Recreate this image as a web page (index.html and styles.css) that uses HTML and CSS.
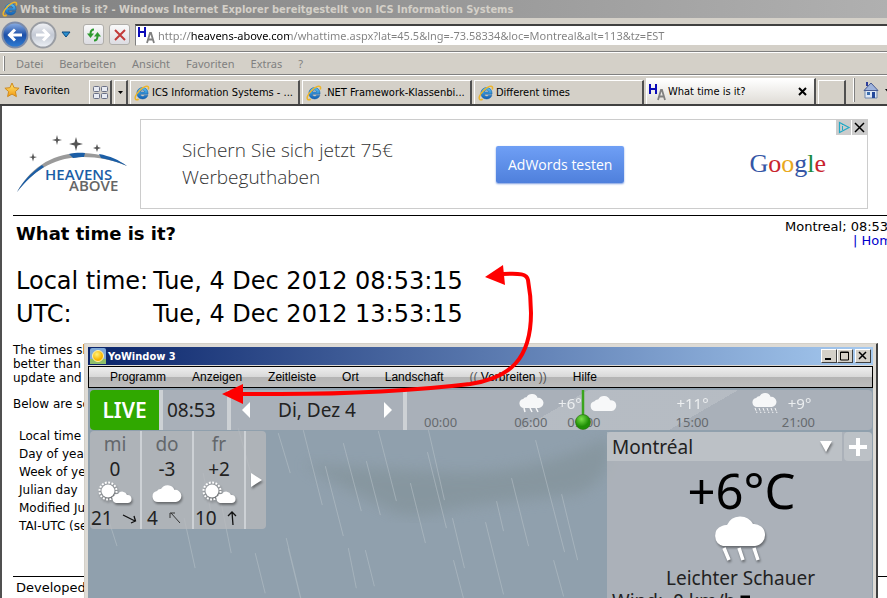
FILE: index.html
```html
<!DOCTYPE html>
<html lang="de">
<head>
    <meta charset="UTF-8">
    <meta name="viewport" content="width=device-width, initial-scale=1.0">
    <title>What time is it?</title>
    <link rel="stylesheet" href="styles.css">
</head>
<body>
    <!-- Shared icons -->
    <svg class="sprite" aria-hidden="true">
        <defs>
            <linearGradient id="ieBlue" x1="0" y1="0" x2="0" y2="1">
                <stop offset="0" stop-color="#5cc3f5"/>
                <stop offset="1" stop-color="#0f5fb5"/>
            </linearGradient>
            <linearGradient id="backBlue" x1="0" y1="0" x2="0" y2="1">
                <stop offset="0" stop-color="#8fb2e6"/>
                <stop offset="0.5" stop-color="#1c4fa8"/>
                <stop offset="1" stop-color="#2f7fd6"/>
            </linearGradient>
            <linearGradient id="fwdGrey" x1="0" y1="0" x2="0" y2="1">
                <stop offset="0" stop-color="#f4f5f8"/>
                <stop offset="0.5" stop-color="#c3c9d4"/>
                <stop offset="1" stop-color="#eef1f6"/>
            </linearGradient>
            <linearGradient id="starGold" x1="0" y1="0" x2="0" y2="1">
                <stop offset="0" stop-color="#ffe873"/>
                <stop offset="1" stop-color="#f39a12"/>
            </linearGradient>
            <radialGradient id="sunGold" cx="0.4" cy="0.35">
                <stop offset="0" stop-color="#fff27a"/>
                <stop offset="1" stop-color="#f7b500"/>
            </radialGradient>
            <radialGradient id="knobGreen" cx="0.4" cy="0.3">
                <stop offset="0" stop-color="#7ae04a"/>
                <stop offset="1" stop-color="#1f8f05"/>
            </radialGradient>
            <filter id="soft"><feGaussianBlur stdDeviation="7"/></filter>
        </defs>
        <symbol id="ie" viewBox="0 0 16 16">
            <path d="M12.6 9.2H6.2c.1 1.300 1 2.200 2.400 2.200.9 0 1.600-.4 2-1h3.200c-.8 2.200-2.700 3.500-5.200 3.500-3.400 0-5.700-2.300-5.700-5.600S5.300 2.600 8.600 2.600s5.400 2.300 5.400 5.700v.9zM6.300 7h4.400c-.2-1.200-1-1.900-2.200-1.900S6.500 5.800 6.300 7z" fill="url(#ieBlue)" stroke="#1460a8" stroke-width="0.600"/>
            <path d="M14.200 4.500C15.200 2 14 .6 11.600 1.400 7.800 2.600 2.800 7.600 1.500 11.300c-1 3 .4 4.200 3.200 2.900" fill="none" stroke="#edb52a" stroke-width="1.500"/>
        </symbol>
        <symbol id="ha" viewBox="0 0 18 18">
            <path d="M2 1v10M8 1v10M2 6h6" fill="none" stroke="#0b0bb8" stroke-width="2"/>
            <path d="M10 17l3-10h1l3 10M11 13.500h5" fill="none" stroke="#808080" stroke-width="1.800"/>
        </symbol>
        <symbol id="cloud" viewBox="0 0 30 18">
            <path d="M6 18a5.500 5.500 0 0 1-1-10.900 4 4 0 0 1 4-2 7.500 7.500 0 0 1 13.500.8A6 6 0 0 1 24 18z" fill="#fff"/>
        </symbol>
        <symbol id="suncloud" viewBox="0 0 34 24">
            <circle cx="10" cy="10" r="8.500" fill="none" stroke="#fff" stroke-width="2" stroke-dasharray="1.800 1.536"/>
            <circle cx="10" cy="10" r="6.500" fill="#fff"/>
            <path d="M18 22a4 4 0 0 1-1-7.600 3 3 0 0 1 3-1.400 5 5 0 0 1 9 1 4 4 0 0 1 1 8z" fill="#fff"/>
        </symbol>
    </svg>

    <!-- Browser -->
    <div class="browser">
        <div class="titlebar">
            <svg class="icon16"><use href="#ie"/></svg>
            <span>What time is it? - Windows Internet Explorer bereitgestellt von ICS Information Systems</span>
        </div>

        <div class="navbar">
            <button class="plain" aria-label="Zurück">
                <svg width="28" height="28" viewBox="0 0 28 28">
                    <circle cx="14" cy="14" r="12.500" fill="url(#backBlue)" stroke="#7c8ba8" stroke-width="2"/>
                    <path d="M21 14H9M14 8.500L8.500 14l5.500 5.500" fill="none" stroke="#fff" stroke-width="3"/>
                </svg>
            </button>
            <button class="plain" aria-label="Vorwärts">
                <svg width="28" height="28" viewBox="0 0 28 28">
                    <circle cx="14" cy="14" r="12.500" fill="url(#fwdGrey)" stroke="#9a9da3" stroke-width="2"/>
                    <path d="M7 14h12M14 8.500l5.500 5.500-5.500 5.500" fill="none" stroke="#fff" stroke-width="3"/>
                </svg>
            </button>
            <button class="plain history" aria-label="Verlauf">
                <svg width="10" height="7" viewBox="0 0 10 7"><path d="M1 1h8L5 6z" fill="#2a8fd0" stroke="#0c4a80"/></svg>
            </button>
            <button class="tool" aria-label="Aktualisieren">
                <svg width="16" height="16" viewBox="0 0 16 16">
                    <path d="M8 2.500C5.500 2.500 4.500 4 4.500 7" fill="none" stroke="#2e9a2e" stroke-width="2"/>
                    <path d="M1 6.500h7L4.500 11z" fill="#2e9a2e"/>
                    <path d="M8 13.500c2.500 0 3.500-1.500 3.500-4.500" fill="none" stroke="#2e9a2e" stroke-width="2"/>
                    <path d="M8 9.500h7L11.500 5z" fill="#2e9a2e"/>
                </svg>
            </button>
            <button class="tool" aria-label="Abbrechen">
                <svg width="16" height="16" viewBox="0 0 16 16"><path d="M3 3l10 10M13 3L3 13" stroke="#c23a3a" stroke-width="2"/></svg>
            </button>
            <div class="address">
                <svg class="icon18"><use href="#ha"/></svg>
                <input type="text" aria-label="Adresse" value="http://heavens-above.com/whattime.aspx?lat=45.5&amp;lng=-73.58334&amp;loc=Montreal&amp;alt=113&amp;tz=EST">
            </div>
        </div>

        <div class="menubar">
            <span class="grip"></span>
            <button>Datei</button>
            <button>Bearbeiten</button>
            <button>Ansicht</button>
            <button>Favoriten</button>
            <button>Extras</button>
            <button>?</button>
        </div>

        <div class="tabbar">
            <button class="favorites">
                <svg width="16" height="16" viewBox="0 0 16 16"><path d="M8 1l2.100 4.700 5 .5-3.700 3.400 1 5L8 12.100l-4.400 2.500 1-5L.9 6.200l5-.5z" fill="url(#starGold)" stroke="#d08a1c"/></svg>
                Favoriten
            </button>
            <button class="tab quick" aria-label="Schnellregisterkarten">
                <svg width="16" height="14" viewBox="0 0 16 14"><g fill="#e8ebf3" stroke="#6a7086"><rect x="0.500" y="0.500" width="6" height="5" rx="1"/><rect x="8.500" y="0.500" width="6" height="5" rx="1"/><rect x="0.500" y="7.500" width="6" height="5" rx="1"/><rect x="8.500" y="7.500" width="6" height="5" rx="1"/></g></svg>
            </button>
            <button class="tab arrow" aria-label="Registerkartenliste">
                <svg width="5" height="3" viewBox="0 0 5 3"><path d="M0 0h5L2.500 3z"/></svg>
            </button>
            <button class="tab page"><svg class="icon16"><use href="#ie"/></svg><span>ICS Information Systems - ...</span></button>
            <button class="tab page"><svg class="icon16"><use href="#ie"/></svg><span>.NET Framework-Klassenbi...</span></button>
            <button class="tab page"><svg class="icon16"><use href="#ie"/></svg><span>Different times</span></button>
            <button class="tab page active">
                <svg class="icon18"><use href="#ha"/></svg><span>What time is it?</span>
                <svg class="close" width="9" height="9" viewBox="0 0 9 9"><path d="M1 1l7 7M8 1L1 8" stroke="#000" stroke-width="2"/></svg>
            </button>
            <button class="tab new" aria-label="Neue Registerkarte"></button>
            <span class="grip tall"></span>
            <button class="home" aria-label="Startseite">
                <svg width="16" height="18" viewBox="0 0 16 18">
                    <path d="M3 1h2v4H3z" fill="#2f3f9a"/>
                    <path d="M2 9h12v8H2z" fill="#dfe8f5" stroke="#7187ad"/>
                    <path d="M8 2L1 9.500h14z" fill="#9fb3dc" stroke="#4a5c92"/>
                    <path d="M9 11h3v6H9z" fill="#24489a"/>
                    <path d="M4 11h3v3H4z" fill="#3c6dad"/>
                </svg>
            </button>
            <svg width="5" height="3" viewBox="0 0 5 3"><path d="M0 0h5L2.500 3z"/></svg>
        </div>
    </div>

    <!-- Page -->
    <main class="content">
        <div class="banner">
            <svg class="logo" width="112" height="64" viewBox="0 0 112 64" role="img" aria-label="Heavens Above">
                <path d="M1 60C17 31 43 20 68 21c17 1 31 5 43 13C97 28 82 25 67 25 42 25 19 36 1 60z" fill="#9a9a9a"/>
                <path d="M1 60c6-11 15-20 25-27l2 2C18 41 9 50 1 60zM53 22c5-1 10-1.500 16-1l-1 4c-4 0-7 .500-11 1zM83 22c11 2 20 6 28 12-9-4-17-6-26-8z" fill="#1b5ea6"/>
                <g fill="#555">
                    <path d="M41 3l1 4 4 1-4 1-1 4-1-4-4-1 4-1z"/>
                    <path d="M60 5l1.500 5.500L67 12l-5.500 1.500L60 19l-1.500-5.500L53 12l5.500-1.500z"/>
                    <path d="M81 12l1 3 3 1-3 1-1 3-1-3-3-1 3-1z"/>
                    <path d="M17 21l1 3.500 3 .500-3 1-1 3.500-1-3.500-3-1 3-.500z"/>
                </g>
                <text class="logo-top" x="29" y="48">HEAVENS</text>
                <text class="logo-bottom" x="53" y="59">ABOVE</text>
            </svg>
            <div class="ad">
                <p>Sichern Sie sich jetzt 75€<br>Werbeguthaben</p>
                <button class="adwords">AdWords testen</button>
                <div class="google"><span class="b">G</span><span class="r">o</span><span class="y">o</span><span class="b">g</span><span class="g">l</span><span class="r">e</span></div>
                <div class="ad-corner">
                    <svg width="15" height="15" viewBox="0 0 15 15"><path fill="#ccc" d="M0 0h15v15H0z"/><path d="M3.500 2.500v10L13 7.500z" fill="none" stroke="#22a9c6" stroke-width="1.200"/><path d="M6.500 6v4M6.500 4v1" stroke="#22a9c6"/></svg>
                    <svg width="15" height="15" viewBox="0 0 15 15"><path fill="#ccc" d="M0 0h15v15H0z"/><path d="M3 3l9 9M12 3l-9 9" stroke="#000" stroke-width="1.500"/></svg>
                </div>
            </div>
        </div>

        <div class="heading">
            <h1>What time is it?</h1>
            <div class="place">
                Montreal; 08:53<br>
                <span class="place-links">| <a href="#">Home</a></span>
            </div>
        </div>

        <table class="clock">
            <tr><td>Local time:</td><td>Tue, 4 Dec 2012 08:53:15</td></tr>
            <tr><td>UTC:</td><td>Tue, 4 Dec 2012 13:53:15</td></tr>
        </table>

        <p class="note">The times shown<br>better than<br>update and</p>
        <p class="note">Below are some</p>

        <table class="dates">
            <tr><td>Local time</td></tr>
            <tr><td>Day of year</td></tr>
            <tr><td>Week of year</td></tr>
            <tr><td>Julian day</td></tr>
            <tr><td>Modified Julian</td></tr>
            <tr><td>TAI-UTC (sec)</td></tr>
        </table>

        <footer>Developed</footer>
    </main>

    <!-- Weather window -->
    <section class="yowindow">
        <div class="yo-title">
            <svg width="16" height="16" viewBox="0 0 16 16"><rect width="16" height="16" rx="2" fill="#7fa9d8"/><path d="M0 11h16v5H0z" fill="#8fbf6a"/><circle cx="8" cy="8" r="5.500" fill="url(#sunGold)" stroke="#fff3b0"/></svg>
            <span>YoWindow 3</span>
            <button aria-label="Minimieren"><svg width="12" height="10" viewBox="0 0 12 10"><path d="M2 7h6v2H2z"/></svg></button>
            <button aria-label="Maximieren"><svg width="12" height="10" viewBox="0 0 12 10"><path d="M1.500 1h8v8h-8zM1 1.500h9" fill="none" stroke="#000"/></svg></button>
            <button class="yo-close" aria-label="Schließen"><svg width="12" height="10" viewBox="0 0 12 10"><path d="M2 1l7 7M9 1L2 8" stroke="#000" stroke-width="1.500"/></svg></button>
        </div>
        <div class="yo-menu">
            <button>Programm</button>
            <button>Anzeigen</button>
            <button>Zeitleiste</button>
            <button>Ort</button>
            <button>Landschaft</button>
            <button><i>((</i> Verbreiten <i>))</i></button>
            <button>Hilfe</button>
        </div>

        <div class="scene">
            <svg class="rain" viewBox="0 0 784 210" preserveAspectRatio="xMidYMin slice">
                <path d="M215 76q60 4 145 8t158-34q10 40-30 56-84 8-120 14-50 14-70 0-50-24-83-44z" fill="#83939a" opacity="0.700" filter="url(#soft)"/>
                <path d="M215 42l19 75M237 78l18 70M255 55l18 68M290 43l18 70M278 73l14 54M322 95l15 60M340 42l16 70M339 64l19 76M364 130l12 50M397 134l18 72M408 113l7 30M423 90l17 68M447 52l29 112M473 106l16 66M96 130l11 50M133 115l10 50M198 150l17 70M200 160l16 65M260 160l8 40M277 162l9 36M167 165l10 40M115 85l10 50M150 40l14 50M190 45l12 40M365 172l10 38M20 130l9 28M465 172l10 36" fill="none" stroke="#bcc6cc" stroke-width="1" opacity="0.500"/>
            </svg>

            <div class="bar">
                <button class="live">LIVE</button>
                <div class="time">08:53</div>
                <div class="date">
                    <button class="plain" aria-label="Voriger Tag"><svg width="8" height="16" viewBox="0 0 8 16"><path d="M8 0v16L0 8z" fill="#fff"/></svg></button>
                    <span>Di, Dez 4</span>
                    <button class="plain" aria-label="Nächster Tag"><svg width="8" height="16" viewBox="0 0 8 16"><path d="M0 0v16l8-8z" fill="#fff"/></svg></button>
                </div>
                <div class="timeline">
                    <div class="forecast">
                        <svg width="26" height="20" viewBox="0 0 26 20"><use href="#cloud" width="25" height="15"/><path d="M5 15l1 4M11 15l2 4M17 15l2 4" stroke="#fff" stroke-width="1.500"/></svg>
                        <span>+6°</span>
                        <svg width="27" height="16" viewBox="0 0 27 16"><use href="#cloud" width="27" height="16"/></svg>
                        <span>+11°</span>
                        <svg width="26" height="22" viewBox="0 0 26 22"><use href="#cloud" width="25" height="15"/><path d="M3 16l2 5M7 16l2 5M11 16l2 5M15 16l2 5M19 16l2 5M23 16l2 5" stroke="#fff" stroke-dasharray="3 1"/></svg>
                        <span>+9°</span>
                    </div>
                    <div class="hours">
                        <span>00:00</span><span>06:00</span><span>09:00</span><span>15:00</span><span>21:00</span>
                    </div>
                    <svg class="marker" width="18" height="40" viewBox="0 0 18 40"><path d="M9 0v26" stroke="#3aa51c" stroke-width="2.500"/><circle cx="9" cy="32" r="7.500" fill="url(#knobGreen)" stroke="#2b6d14" stroke-width="0.600"/></svg>
                </div>
            </div>

            <div class="lower">
                <div class="days">
                    <div class="day">
                        <span class="name">mi</span><span>0</span>
                        <svg width="34" height="24"><use href="#suncloud"/></svg>
                        <div class="low">21<svg width="15" height="12" viewBox="0 0 15 12"><path d="M1 3l12 6M9 11l4.500-2L12 4" fill="none" stroke="#111" stroke-width="1.300"/></svg></div>
                    </div>
                    <div class="day">
                        <span class="name">do</span><span>-3</span>
                        <svg width="30" height="24" viewBox="0 0 30 24"><use href="#cloud" y="3" width="30" height="18"/></svg>
                        <div class="low short">4<svg width="15" height="12" viewBox="0 0 15 12"><path d="M13 11L4 1M3 6V1h5" fill="none" stroke="#333"/></svg></div>
                    </div>
                    <div class="day">
                        <span class="name">fr</span><span>+2</span>
                        <svg width="34" height="24"><use href="#suncloud"/></svg>
                        <div class="low">10<svg width="15" height="14" viewBox="0 0 15 14"><path d="M7 14L6 1M2 5l4-4 4 4" fill="none" stroke="#111" stroke-width="1.300"/></svg></div>
                    </div>
                    <button class="more" aria-label="Weitere Tage"><svg width="11" height="14" viewBox="0 0 11 14"><path d="M0 0v14l11-7z" fill="#fff"/></svg></button>
                </div>

                <div class="current">
                    <div class="place-row">
                        <div class="picker">
                            <select aria-label="Ort"><option>Montréal</option></select>
                            <svg width="12" height="11" viewBox="0 0 12 11"><path d="M0 0h12L6 11z" fill="#fff"/></svg>
                        </div>
                        <button class="add" aria-label="Ort hinzufügen"><svg width="18" height="18" viewBox="0 0 18 18"><path d="M9 0v18M0 9h18" stroke="#fff" stroke-width="4"/></svg></button>
                    </div>
                    <div class="temp">+6°C</div>
                    <svg class="big-cloud" width="60" height="50" viewBox="0 0 60 50">
                        <path d="M12 31a10.500 10.500 0 0 1-1-20 10 10 0 0 1 5-1 14.500 14.500 0 0 1 26-1A11 11 0 0 1 44 31z" fill="#fff"/>
                        <path d="M13 33l5 12M28 33l4 12M43 33l4 12" stroke="#fff" stroke-width="3.500"/>
                    </svg>
                    <div class="state">Leichter Schauer</div>
                    <div class="wind">Wind:&nbsp; 0 km/h <svg width="12" height="12" viewBox="0 0 12 12"><path d="M10 11L3 4M2 9V2h8" fill="none" stroke="#000" stroke-width="3"/></svg></div>
                </div>
            </div>
        </div>
    </section>

    <!-- Arrow joining the two clocks -->
    <svg class="pointer" width="320" height="150" viewBox="220 260 320 150" aria-hidden="true">
        <path d="M240 394h40c70 0 140-4 190-10 40-6 61-25 61-71q0-17-3-33c-1-6-8-7-25-6" fill="none" stroke="#f00" stroke-width="4"/>
        <path d="M222 394l21-10v20zM485 277l18-12 2 20z" fill="#f00"/>
    </svg>
</body>
</html>
```

FILE: styles.css
```css
* {
    box-sizing: border-box;
}
html {
    height: 100%;
}
body {
    margin: 0;
    height: 100%;
    overflow: hidden;
    position: relative;
    background-color: #fff;
    color: #000;
    font-family: "DejaVu Sans", Verdana, sans-serif;
    font-size: 12px;
}
button, input, select {
    font: inherit;
    color: inherit;
    margin: 0;
    padding: 0;
    border: 0;
    background: none;
}
svg {
    display: block;
    flex: none;
}
.sprite {
    position: absolute;
    width: 0;
    height: 0;
}
.icon16 {
    width: 16px;
    height: 16px;
}
.icon18 {
    width: 18px;
    height: 18px;
}

/* Browser */
.browser {
    background-color: #d4d0c8;
    font-family: "DejaVu Sans Condensed", "DejaVu Sans", Tahoma, sans-serif;
    font-size: 11px;
    white-space: nowrap;
}
.titlebar {
    display: flex;
    align-items: center;
    gap: 2px;
    height: 18px;
    padding-left: 2px;
    background: linear-gradient(to right, #808080, #b0b0b0);
    color: #d4d0c8;
    font-weight: bold;
}
.navbar {
    display: flex;
    align-items: center;
    height: 34px;
    padding-left: 1px;
    border-bottom: 1px solid #808080;
}
.history {
    margin: 0 12px 0 4px;
}
.tool {
    display: flex;
    align-items: center;
    justify-content: center;
    width: 21px;
    height: 21px;
    margin-right: 5px;
    border: 1px solid #b0aeaa;
    border-radius: 3px;
    background: linear-gradient(#fafafa, #dcdce2);
}
.address {
    display: flex;
    align-items: center;
    flex: 1;
    gap: 3px;
    height: 22px;
    padding-left: 1px;
    border: 1px solid #808080;
    border-top: 2px solid #404040;
    border-right: 0;
    border-bottom-color: #d4d0c8;
    background-color: #fff;
}
.address input {
    flex: 1;
    height: 18px;
    color: transparent;
    font-family: "Noto Sans", Tahoma, sans-serif;
    background: linear-gradient(to right, #808080 32px, #000 32px, #000 131px, #808080 131px);
    -webkit-background-clip: text;
    background-clip: text;
}
.menubar {
    display: flex;
    align-items: center;
    gap: 16px;
    height: 23px;
    padding-left: 3px;
    border-top: 1px solid #fff;
    border-bottom: 1px solid #808080;
    color: #808080;
    font-family: "Noto Sans", Tahoma, sans-serif;
}
.grip {
    width: 2px;
    height: 15px;
    margin-right: -5px;
    border-right: 1px solid #808080;
    background-color: #fff;
}
.tabbar {
    display: flex;
    align-items: flex-end;
    height: 31px;
    border-top: 1px solid #fff;
    border-bottom: 2px solid #404040;
}
.favorites {
    display: flex;
    align-items: center;
    align-self: center;
    gap: 4px;
    width: 85px;
    padding-left: 4px;
}
.tab {
    display: flex;
    align-items: center;
    height: 24px;
    margin-left: 4px;
    border-top: 1px solid #fff;
    border-left: 1px solid #fff;
    border-right: 2px solid #505050;
}
.quick {
    width: 23px;
    padding-left: 3px;
}
.arrow {
    width: 14px;
    margin-left: 2px;
    padding-left: 3px;
}
.page {
    flex: 1;
    max-width: 170px;
    gap: 2px;
    padding-left: 3px;
    margin-left: 2px;
    overflow: hidden;
}
.active {
    height: 26px;
    padding-left: 1px;
    background: linear-gradient(#fff, #dfdcd6);
}
.close {
    margin: 0 7px 0 auto;
}
.new {
    width: 28px;
    margin-left: 2px;
}
.tall {
    height: 24px;
    margin: 0 8px 2px 7px;
}
.home {
    margin: 0 6px 5px 0;
}
.tabbar > svg {
    align-self: center;
    margin-right: -3px;
}

/* Page */
.content {
    padding: 13px 0 0 11px;
    border-left: 2px solid #505050;
}
.banner {
    display: flex;
    align-items: center;
    gap: 12px;
    padding: 0 19px 6px 3px;
}
.logo text {
    font-family: "Open Sans", sans-serif;
    font-size: 15px;
    font-weight: 600;
}
.logo .logo-top {
    fill: #1b5ea6;
}
.logo .logo-bottom {
    fill: #666;
}
.ad {
    display: flex;
    align-items: center;
    justify-content: space-between;
    position: relative;
    flex: 1;
    height: 90px;
    padding: 0 41px;
    border: 1px solid #ccc;
    font-family: "Open Sans", sans-serif;
}
.ad p {
    margin: 0;
    font-size: 19px;
    font-weight: 300;
    line-height: 27px;
    color: #333;
}
.adwords {
    height: 37px;
    margin-right: 22px;
    padding: 0 12px;
    border-radius: 2px;
    background: linear-gradient(#6f9ff5, #4f80dc);
    box-shadow: 0 1px 2px #7a9be0;
    color: #fff;
    font-size: 14px;
}
.google {
    font-family: "Liberation Serif", serif;
    font-size: 26px;
}
.google .b { color: #3556a6; }
.google .r { color: #c9252d; }
.google .y { color: #e9a820; }
.google .g { color: #1a8a3c; }
.ad-corner {
    display: flex;
    gap: 1px;
    position: absolute;
    top: 0;
    right: 0;
}
.heading {
    display: flex;
    justify-content: space-between;
    height: 50px;
    border-top: 1px solid #000;
}
h1 {
    margin: 7px 0 0 3px;
    font-size: 18px;
    line-height: 22px;
}
.place {
    width: 102px;
    padding-top: 4px;
    font-size: 13px;
    line-height: 14px;
    white-space: nowrap;
}
.place-links {
    padding-left: 68px;
    color: #00c;
}
.place a {
    color: #00c;
    text-decoration: none;
}
.clock {
    border-spacing: 0;
    font-size: 24px;
    line-height: 33px;
}
.clock td {
    padding: 0 2px 0 3px;
}
.note {
    margin: 12px 0 12px;
    line-height: 14px;
}
.note + .note {
    margin-bottom: 16px;
}
.dates {
    border-spacing: 0;
    line-height: 18px;
}
.dates td {
    padding: 0 6px;
}
footer {
    margin-top: 41px;
    padding: 3px;
    border-top: 1px solid #000;
    font-size: 13px;
}

/* Weather window */
.yowindow {
    display: flex;
    flex-direction: column;
    position: absolute;
    top: 343px;
    left: 84px;
    right: 9px;
    bottom: 0;
    padding: 3px 3px 0;
    border: 1px solid #d4d0c8;
    border-right: 2px solid #404040;
    border-bottom: 0;
    background-color: #dedbd5;
    white-space: nowrap;
}
.yo-title {
    display: flex;
    align-items: center;
    height: 18px;
    padding: 0 2px;
    background: linear-gradient(to right, #0a246a, #a6caf0);
    color: #fff;
    font-family: "DejaVu Sans Condensed", "DejaVu Sans", Tahoma, sans-serif;
    font-size: 11px;
    font-weight: bold;
}
.yo-title span {
    flex: 1;
    padding-left: 2px;
}
.yo-title button {
    width: 16px;
    height: 14px;
    padding: 1px;
    border: 1px solid #404040;
    border-top-color: #fff;
    border-left-color: #fff;
    background-color: #d4d0c8;
}
.yo-title .yo-close {
    margin-left: 2px;
}
.yo-menu {
    display: flex;
    align-items: center;
    gap: 26px;
    height: 22px;
    margin-top: 1px;
    padding-left: 21px;
    border: 1px solid #000;
    background: linear-gradient(#eee, #d8d8d8 50%, #b4b4b4 50%, #bdbdbd);
    font-family: "Liberation Sans", Arial, sans-serif;
    font-size: 12px;
}
.yo-menu i {
    color: #555;
    font-style: normal;
}
.scene {
    flex: 1;
    position: relative;
    padding: 2px 1px 0 2px;
    overflow: hidden;
    background-color: #90a0ad;
    color: #222;
    font-family: "Noto Sans", Tahoma, sans-serif;
    font-size: 19px;
}
.rain {
    position: absolute;
    top: 0;
    left: 0;
    width: 100%;
    height: 100%;
}
.bar, .lower {
    display: flex;
    position: relative;
}
.bar {
    height: 40px;
}
.live {
    width: 69px;
    border-radius: 4px 0 0 4px;
    background-color: #30a800;
    color: #fff;
    font-size: 21px;
    font-weight: 600;
}
.time, .date, .timeline {
    border-left: 4px solid #cdd1d5;
    background-color: rgba(178, 182, 190, 0.75);
}
.time {
    width: 68px;
    padding-left: 4px;
    line-height: 40px;
}
.date {
    display: flex;
    align-items: center;
    justify-content: space-between;
    width: 176px;
    padding: 0 11px;
}
.timeline {
    flex: 1;
    position: relative;
    border-radius: 0 4px 4px 0;
    background-image: linear-gradient(150deg, rgba(255,255,255,0) 34%, rgba(255,255,255,0.15) 34%, rgba(255,255,255,0.15) 62%, rgba(255,255,255,0) 62%);
}
.forecast, .hours {
    display: grid;
}
.forecast {
    grid-template-columns: 39fr 32fr 86fr 75fr 36fr 84fr;
    align-items: center;
    height: 25px;
    padding-left: 112px;
    color: #f2f4f5;
    font-size: 15px;
    opacity: 0.9;
}
.hours {
    grid-template-columns: 90fr 53fr 108fr 106fr 90fr;
    padding-left: 17px;
    color: #666a6e;
    font-size: 13px;
    line-height: 14px;
}
.marker {
    position: absolute;
    top: 0;
    left: 36%;
}
.lower {
    justify-content: space-between;
    align-items: flex-start;
    padding-top: 1px;
}
.days {
    display: flex;
    border-radius: 4px;
    background-color: rgba(184, 185, 188, 0.75);
}
.day {
    display: flex;
    flex-direction: column;
    align-items: center;
    width: 52px;
    height: 98px;
    border-right: 2px solid #cdd1d5;
    line-height: 24px;
}
.day .name {
    color: #63676b;
    line-height: 26px;
}
.day > svg, .more svg, .picker svg, .big-cloud {
    filter: drop-shadow(1px 2px 1px rgba(0, 0, 0, 0.4));
}
.low {
    display: flex;
    align-items: center;
    justify-content: space-between;
    align-self: stretch;
    padding: 0 3px 0 1px;
    line-height: 26px;
}
.low.short {
    padding: 0 10px 0 5px;
}
.more {
    width: 20px;
    padding-left: 5px;
}
.current {
    width: 265px;
    min-height: 180px;
    margin-top: 1px;
    border-radius: 4px;
    background-color: rgba(178, 181, 188, 0.8);
    text-align: center;
}
.place-row {
    display: flex;
    gap: 2px;
    height: 29px;
}
.picker {
    display: flex;
    align-items: center;
    flex: 1;
    padding: 0 10px 0 5px;
    background-color: rgba(205, 210, 212, 0.5);
}
.picker select {
    flex: 1;
    appearance: none;
}
.add {
    width: 28px;
    padding-left: 5px;
    border-radius: 4px;
    background-color: rgba(205, 210, 212, 0.5);
}
.temp {
    padding-left: 4px;
    font-size: 49px;
    line-height: 58px;
    color: #000;
}
.big-cloud {
    margin: -4px 0 0 104px;
}
.state {
    padding-left: 2px;
    line-height: 26px;
}
.wind {
    display: flex;
    align-items: center;
    gap: 4px;
    padding-left: 5px;
    line-height: 20px;
}

/* Arrow */
.pointer {
    position: absolute;
    top: 260px;
    left: 220px;
}
```
